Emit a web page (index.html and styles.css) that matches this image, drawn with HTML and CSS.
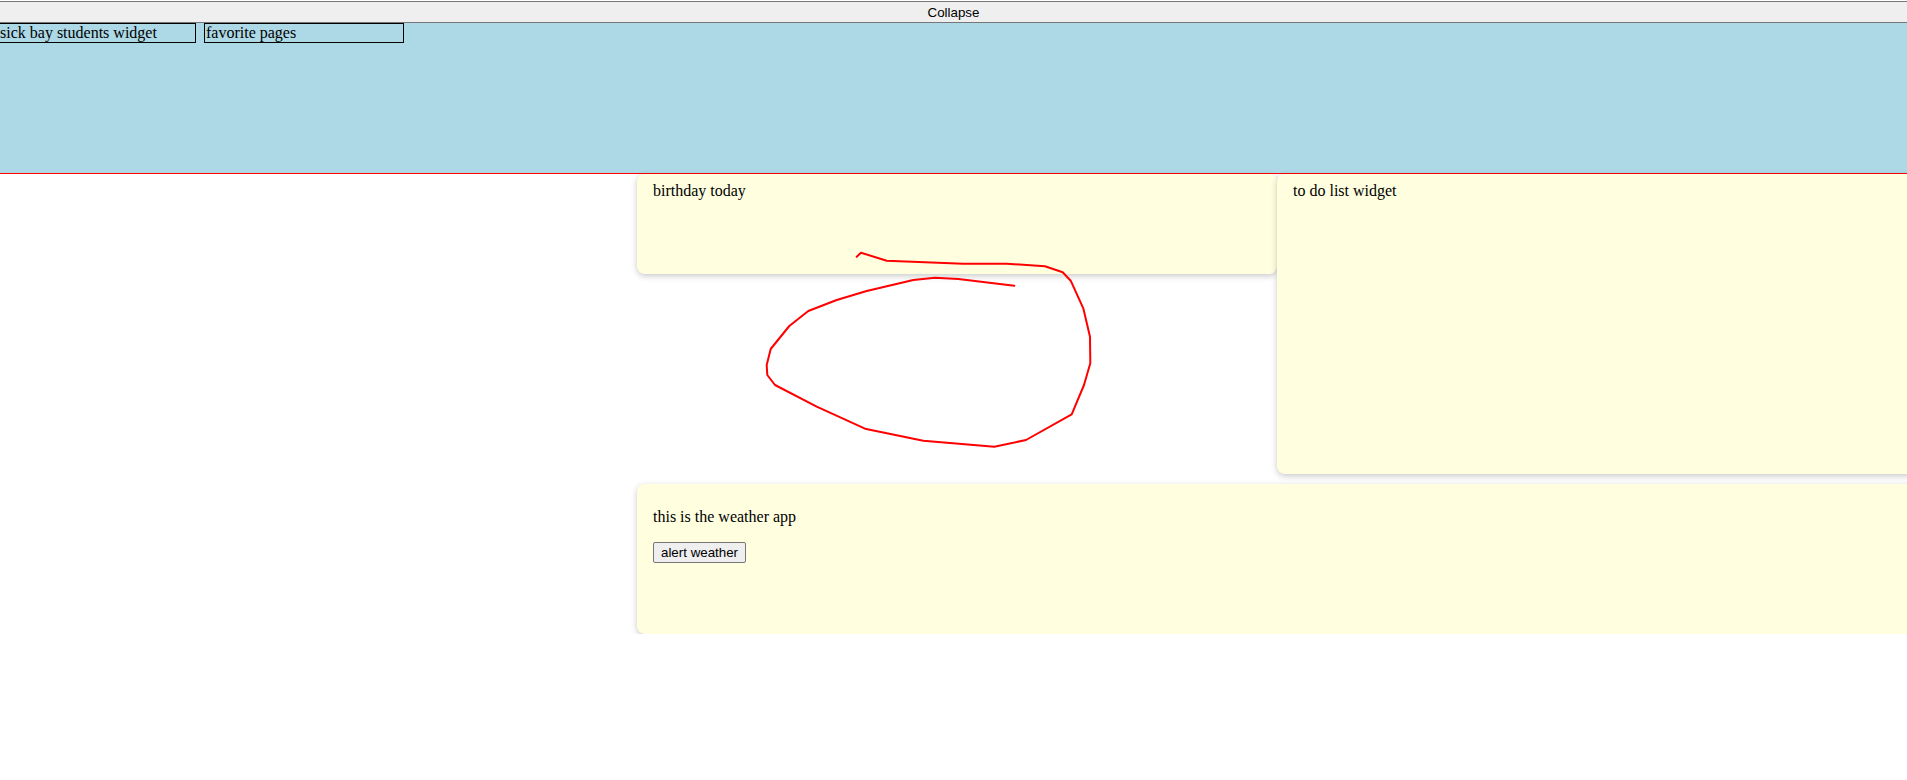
FILE: index.html
```html
<!DOCTYPE html>
<html>
<head>
<meta charset="utf-8">
<link rel="stylesheet" href="styles.css">
</head>
<body>
<button class="collapse">Collapse</button>
<div class="favbar">
  <div class="favbox first">sick bay students widget</div>
  <div class="favbox">favorite pages</div>
</div>
<div class="widgets">
  <div class="card birthday">birthday today</div>
  <div class="card todo">to do list widget</div>
  <div class="card weather">
    <p class="weather-text">this is the weather app</p>
    <button class="alert-btn">alert weather</button>
  </div>
</div>
<svg class="scribble" width="1907" height="780" viewBox="0 0 1907 780">
  <polyline fill="none" stroke="#ff0000" stroke-width="2" stroke-linejoin="round" stroke-linecap="round"
    points="856.7,256.7 861,252.7 886.7,260.7 963.3,263.7 1006.7,263.7 1045,266.3 1062.7,272.3 1070.7,280.7 1083.3,308.3 1090,336.7 1090.3,363.3 1084,385 1071.7,414.3 1026,440 994.3,446.7 923.3,440.7 865,428.7 816.7,406.7 775,385 767.3,375 766.7,365 770.7,349 789.3,326 808.3,311 836.7,300 866.7,291 913.3,280 935,277.7 958.3,279 1014.3,285.7"/>
</svg>
</body>
</html>
```

FILE: styles.css
```css
html {
  overflow: hidden;
}
body {
  margin: 0;
  font-family: "Liberation Serif", "Times New Roman", serif;
  font-size: 16px;
  color: #000;
  background: #fff;
}
.collapse {
  display: block;
  width: 100%;
  height: 22px;
  margin: 1px 0 0 0;
  padding: 0;
  border: none;
  border-top: 1px solid #767676;
  border-bottom: 1px solid #767676;
  background: #efefef;
  font-family: "Liberation Sans", Arial, sans-serif;
  font-size: 13.333px;
  color: #000;
}
.favbar {
  display: flex;
  gap: 8px;
  align-items: flex-start;
  height: 150px;
  background: #add8e6;
  border-bottom: 1px solid #ff0000;
}
.favbox {
  width: 200px;
  box-sizing: border-box;
  border: 1px solid #000;
  line-height: 18px;
  padding: 0 0 0 1px;
}
.favbox.first {
  margin-left: -4px;
  padding-left: 3px;
}
.widgets {
  display: grid;
  grid-template-columns: 640px 640px;
  row-gap: 10px;
  margin-left: 637px;
  align-items: start;
}
.card {
  box-sizing: border-box;
  background: #ffffe0;
  border-radius: 8px;
  box-shadow: 0 2px 6px rgba(0, 0, 0, 0.22);
  padding: 8px 16px;
}
.birthday {
  height: 100px;
}
.todo {
  height: 300px;
}
.weather {
  grid-column: 1 / span 2;
  height: 150px;
}
.weather-text {
  margin: 16px 0;
}
.alert-btn {
  font-family: "Liberation Sans", Arial, sans-serif;
  font-size: 13.333px;
  padding: 1px 7px;
  border: 1px solid #767676;
  border-radius: 2px;
  background: #efefef;
  color: #000;
  height: 21px;
}
.scribble {
  position: absolute;
  top: 0;
  left: 0;
  pointer-events: none;
}
```
